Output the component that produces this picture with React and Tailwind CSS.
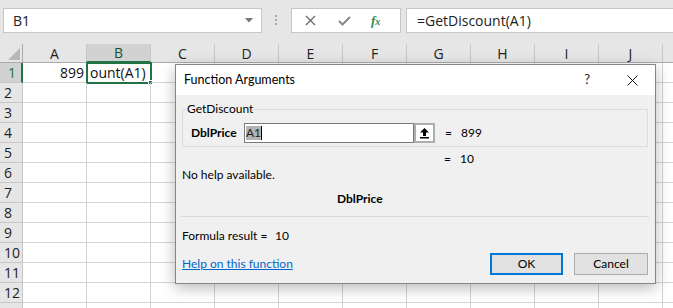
import React from "react";

const columns = ["A", "B", "C", "D", "E", "F", "G", "H", "I", "J", ""];
const rows = [1, 2, 3, 4, 5, 6, 7, 8, 9, 10, 11, 12, 13];

function UploadArrow() {
  return (
    <svg width="11" height="12" viewBox="0 0 11 12">
      <path d="M5.5 1 L10 5.5 L7 5.5 L7 9 L4 9 L4 5.5 L1 5.5 Z" fill="#000" />
      <rect x="1" y="10" width="9" height="1.5" fill="#000" />
    </svg>
  );
}

function FormulaBar() {
  return (
    <div className="flex h-[44px] items-start bg-[#e6e6e6] pt-[8px]">
      <div className="ml-[3px] flex h-[25px] w-[259px] items-center justify-between border border-[#c6c6c6] bg-white pl-[9px] pr-[8px] text-[14px] text-[#222]">
        <span>B1</span>
        <svg width="8" height="5" viewBox="0 0 8 5">
          <path d="M0 0 L8 0 L4 4.5 Z" fill="#777" />
        </svg>
      </div>
      <div className="ml-[13px] mt-[7px] flex flex-col gap-[2px]">
        <span className="h-[2px] w-[2px] bg-[#a8a8a8]" />
        <span className="h-[2px] w-[2px] bg-[#a8a8a8]" />
        <span className="h-[2px] w-[2px] bg-[#a8a8a8]" />
      </div>
      <div className="ml-[14px] flex h-[25px] w-[110px] items-center border border-[#c6c6c6] bg-white">
        <svg className="ml-[13px]" width="11" height="11" viewBox="0 0 11 11">
          <path d="M1 1 L10 10 M10 1 L1 10" stroke="#6d6d6d" strokeWidth="1.4" />
        </svg>
        <svg className="ml-[22px]" width="13" height="10" viewBox="0 0 13 10">
          <path d="M1 5 L4.5 8.5 L12 1" stroke="#8a8a8a" strokeWidth="2" fill="none" />
        </svg>
        <span className="ml-[20px] font-['Liberation_Serif',serif] text-[13px] italic font-bold text-[#2d8a4e]">
          f<span className="text-[10px]">x</span>
        </span>
      </div>
      <div className="ml-[5px] flex h-[25px] flex-1 items-center border border-r-0 border-[#c6c6c6] bg-white pl-[10px] text-[14px] text-[#222]">
        =GetDiscount(A1)
      </div>
    </div>
  );
}

function HeaderRow() {
  return (
    <div className="flex h-[19px]">
      <div className="relative h-full w-[23px] shrink-0 border-b border-r border-[#ababab] bg-[#e6e6e6]">
        <svg className="absolute bottom-[2px] right-[2px]" width="12" height="12" viewBox="0 0 12 12">
          <path d="M12 0 L12 12 L0 12 Z" fill="#b7b7b7" />
        </svg>
      </div>
      {columns.map((col, i) => (
        <div
          key={i}
          className={
            col === "B"
              ? "flex h-full w-[64px] shrink-0 items-center justify-center border-b-2 border-r border-b-[#217346] border-r-[#c6c6c6] bg-[#d2d2d2] text-[14px] text-[#1e4d2f]"
              : "flex h-full w-[64px] shrink-0 items-center justify-center border-b border-r border-b-[#ababab] border-r-[#c6c6c6] bg-[#e6e6e6] text-[14px] text-[#222]"
          }
        >
          {col}
        </div>
      ))}
    </div>
  );
}

function GridRow({ n }) {
  return (
    <div className="flex h-[20px]">
      <div
        className={
          n === 1
            ? "flex h-full w-[23px] shrink-0 items-center border-b border-r-2 border-b-[#c6c6c6] border-r-[#217346] bg-[#d2d2d2] pl-[8px] text-[14px] text-[#217346]"
            : "flex h-full w-[23px] shrink-0 items-center border-b border-r border-[#c6c6c6] bg-[#e6e6e6] pl-[4px] text-[14px] text-[#222]"
        }
      >
        {n < 13 ? n : ""}
      </div>
      {columns.map((col, i) => (
        <div
          key={i}
          className="relative flex h-full w-[64px] shrink-0 items-center border-b border-r border-[#d4d4d4] text-[14px] text-[#111]"
        >
          {n === 1 && col === "A" && <span className="ml-auto pr-[2px]">899</span>}
          {n === 1 && col === "B" && (
            <>
              <span className="pl-[3px]">ount(A1)</span>
              <div className="absolute -left-[1px] -top-[1px] h-[22px] w-[66px] border-2 border-[#217346]" />
              <div className="absolute -bottom-[3px] -right-[3px] h-[5px] w-[5px] border border-white bg-[#217346]" />
            </>
          )}
        </div>
      ))}
    </div>
  );
}

function FunctionDialog() {
  return (
    <div className="absolute left-[175px] top-[64px] flex h-[220px] w-[481px] flex-col border border-[#858585] bg-[#f0f0f0] font-['Lato',sans-serif] text-[12px] text-[#000] shadow-[0_4px_14px_rgba(0,0,0,0.28)]">
      <div className="flex h-[30px] items-center bg-white pl-[8px] text-[12.5px]">
        <span>Function Arguments</span>
        <span className="ml-auto mr-[37px] text-[13px] text-[#222]">?</span>
        <svg className="mr-[17px]" width="11" height="11" viewBox="0 0 11 11">
          <path d="M0.5 0.5 L10.5 10.5 M10.5 0.5 L0.5 10.5" stroke="#111" strokeWidth="1" />
        </svg>
      </div>

      <div className="relative ml-[6px] mt-[14px] h-[38px] w-[466px] border border-[#dcdcdc]">
        <span className="absolute -top-[10px] left-[3px] bg-[#f0f0f0] px-[1px]">GetDiscount</span>
        <div className="mt-[13px] flex h-[20px] items-center">
          <span className="w-[61px] shrink-0 pl-[8px] font-bold">DblPrice</span>
          <div className="flex h-[20px] w-[170px] items-center border border-[#7a7a7a] bg-white pl-[1px]">
            <span className="bg-[#b4b4b4] leading-[14px] text-[#222]">A1</span>
            <span className="h-[14px] w-px bg-black" />
          </div>
          <div className="flex h-[20px] w-[21px] items-center justify-center border-2 border-[#adadad] bg-white">
            <UploadArrow />
          </div>
          <span className="ml-[10px]">=</span>
          <span className="ml-[9px]">899</span>
        </div>
      </div>

      <div className="mt-[4px] flex h-[16px] items-center pl-[268px]">
        <span>=</span>
        <span className="ml-[9px]">10</span>
      </div>
      <div className="flex h-[16px] items-center pl-[6px]">No help available.</div>
      <div className="mt-[8px] flex h-[16px] items-center pl-[161px] font-bold">DblPrice</div>
      <div className="ml-[5px] mt-[9px] h-px w-[468px] bg-[#d9d9d9]" />
      <div className="mt-[11px] flex h-[16px] items-center pl-[6px]">
        <span className="w-[93px] shrink-0">Formula result =</span>
        <span>10</span>
      </div>
      <div className="mt-[9px] flex h-[22px] items-center pl-[6px]">
        <span className="text-[#0066cc] underline">Help on this function</span>
        <button className="ml-auto flex h-[22px] w-[73px] items-center justify-center border-2 border-[#0078d7] bg-[#e1e1e1]">
          OK
        </button>
        <button className="ml-[11px] mr-[7px] flex h-[22px] w-[74px] items-center justify-center border border-[#adadad] bg-[#e1e1e1]">
          Cancel
        </button>
      </div>
    </div>
  );
}

export default function App() {
  return (
    <div className="relative h-[308px] w-[673px] overflow-hidden bg-white font-['Open_Sans',sans-serif]">
      <FormulaBar />
      <HeaderRow />
      {rows.map((n) => (
        <GridRow key={n} n={n} />
      ))}
      <FunctionDialog />
    </div>
  );
}
